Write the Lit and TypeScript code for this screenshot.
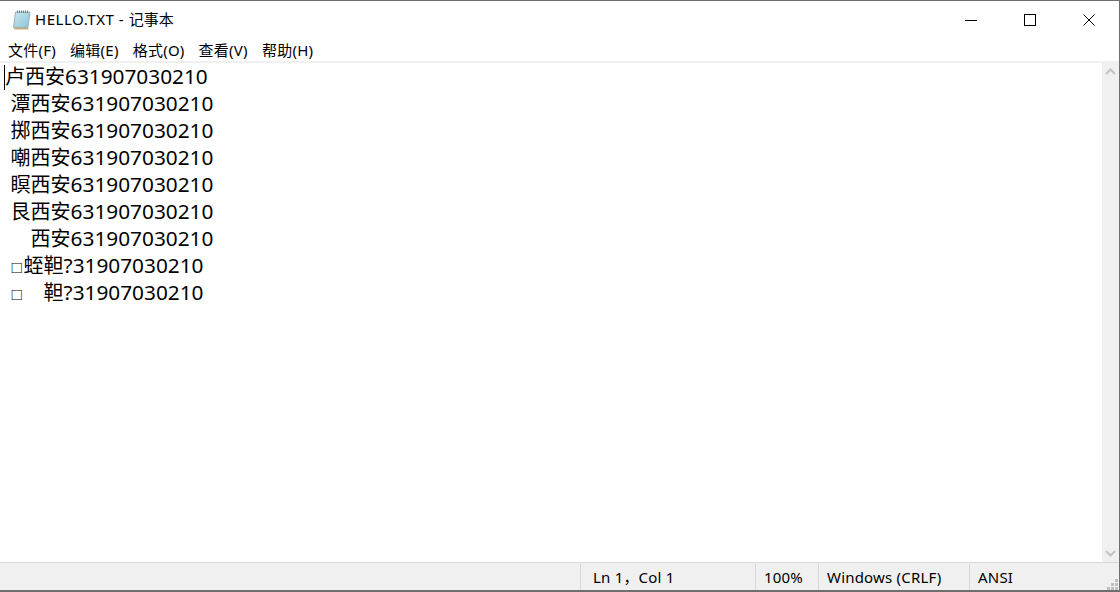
import { LitElement, html, css } from "lit";
import { customElement } from "lit/decorators.js";

const LINES = [
  "卢西安631907030210",
  " 潭西安631907030210",
  " 掷西安631907030210",
  " 嘲西安631907030210",
  " 瞑西安631907030210",
  " 艮西安631907030210",
  " \u3000西安631907030210",
];

@customElement("app-root")
export class AppRoot extends LitElement {
  static styles = css`
    :host { display: block; width: 1120px; height: 592px; font-family: "Noto Sans", "Noto Sans CJK SC", sans-serif; color: #000; }
    .win { box-sizing: border-box; width: 1120px; height: 592px; display: flex; flex-direction: column; background: #fff; border-top: 1px solid #6f6f6f; border-right: 1px solid #6f6f6f; border-bottom: 2px solid #6f6f6f; }
    .title { height: 39px; display: flex; align-items: center; padding-left: 10px; padding-right: 1px; font-size: 15px; }
    .title svg.app { margin-right: 3px; flex: none; position: relative; top: -1px; }
    .title-text { flex: 1; position: relative; top: -2px; white-space: pre; }
    .latin { letter-spacing: .55px; }
    .ctl { width: 59px; height: 39px; display: flex; align-items: center; justify-content: center; position: relative; top: -1px; }
    .menu { height: 21px; display: flex; font-size: 15px; line-height: 21px; padding-left: 8px; gap: 14px; letter-spacing: .25px; }
    .sep { height: 2px; background: #f0f0f0; }
    .body { flex: 1; display: flex; min-height: 0; }
    .text { flex: 1; position: relative; padding: 0 0 0 5px; font-size: 20px; line-height: 27px; }
    .text .line { height: 27px; white-space: pre; word-spacing: .4px; }
    .num { font-size: 20.8px; }
    .sq { display: inline-block; font-size: 12.5px; font-weight: 700; width: 13px; color: #000; }
    .caret { position: absolute; left: 4px; top: 2px; width: 1px; height: 25px; background: #000; }
    .scroll { width: 17px; background: #f0f0f0; display: flex; flex-direction: column; justify-content: space-between; align-items: center; }
    .arrow { height: 17px; display: flex; align-items: center; justify-content: center; }
    .status { height: 27px; display: flex; background: #f0f0f0; border-top: 1px solid #d7d7d7; font-size: 15px; position: relative; }
    .cell { box-sizing: border-box; border-left: 1px solid #d7d7d7; margin: 1px 0 0; line-height: 26px; padding-left: 8px; letter-spacing: .2px; white-space: pre; }
    .blank { flex: 0 0 580px; border: 0; padding: 0; }
    .pos { width: 175px; padding-left: 12px; }
    .comma { letter-spacing: -4px; }
    .zoom { width: 63px; }
    .eol { width: 151px; }
    .enc { flex: 1; }
    .grip { position: absolute; right: 1px; bottom: 0; }
  `;

  render() {
    return html`
      <div class="win">
        <div class="title">
          <svg class="app" width="22" height="22" viewBox="0 0 22 22">
            <defs>
              <linearGradient id="paper" x1="0" y1="0" x2="1" y2="1">
                <stop offset="0" stop-color="#c9e8f0" />
                <stop offset="1" stop-color="#8cc4d6" />
              </linearGradient>
            </defs>
            <path d="M5.500 3h14.500L18 18.500H3.500z" fill="url(#paper)" stroke="#86a6b0" stroke-width=".8" />
            <path d="M3.500 18.500H18l.8 2H4.500z" fill="#c4ad82" />
            <path d="M7.500 1.500v2.500M9.500 1.500v2.500M11.500 1.500v2.500M13.500 1.500v2.500M15.500 1.500v2.500M17.500 1.500v2.500" stroke="#6d7f88" stroke-width="1" />
          </svg>
          <span class="title-text"><span class="latin">HELLO.TXT - </span>记事本</span>
          <div class="ctl"><svg width="12" height="12" viewBox="0 0 12 12"><path d="M0 6.500h12" stroke="#000" fill="none" /></svg></div>
          <div class="ctl"><svg width="12" height="12" viewBox="0 0 12 12"><rect x=".5" y=".5" width="11" height="11" fill="none" stroke="#000" /></svg></div>
          <div class="ctl"><svg width="12" height="12" viewBox="0 0 12 12"><path d="M.5.500l11 11M11.500.500l-11 11" stroke="#000" fill="none" /></svg></div>
        </div>
        <div class="menu">
          <span>文件(F)</span><span>编辑(E)</span><span>格式(O)</span><span>查看(V)</span><span>帮助(H)</span>
        </div>
        <div class="sep"></div>
        <div class="body">
          <div class="text">
            <div class="caret"></div>
            ${LINES.map((l) => {
              const m = l.match(/^(.*?)(\d+)$/)!;
              return html`<div class="line">${m[1]}<span class="num">${m[2]}</span></div>`;
            })}
            <div class="line"> <span class="sq">□</span>蛭靼<span class="num">?31907030210</span></div>
            <div class="line"> <span class="sq">□</span>\u3000靼<span class="num">?31907030210</span></div>
          </div>
          <div class="scroll">
            <div class="arrow"><svg width="11" height="7" viewBox="0 0 11 7"><path d="M1 6l4.500-4.500L10 6" stroke="#c4c4c4" stroke-width="2" fill="none" /></svg></div>
            <div class="arrow"><svg width="11" height="7" viewBox="0 0 11 7"><path d="M1 1l4.500 4.500L10 1" stroke="#c4c4c4" stroke-width="2" fill="none" /></svg></div>
          </div>
        </div>
        <div class="status">
          <div class="cell blank"></div>
          <div class="cell pos">Ln 1<span class="comma">，</span> Col 1</div>
          <div class="cell zoom">100%</div>
          <div class="cell eol">Windows (CRLF)</div>
          <div class="cell enc">ANSI</div>
          <svg class="grip" width="11" height="11" viewBox="0 0 11 11" fill="#c0c0c0">
            <rect x="8" y="0" width="3" height="3" /><rect x="4" y="4" width="3" height="3" /><rect x="8" y="4" width="3" height="3" />
            <rect x="0" y="8" width="3" height="3" /><rect x="4" y="8" width="3" height="3" /><rect x="8" y="8" width="3" height="3" />
          </svg>
        </div>
      </div>
    `;
  }
}
